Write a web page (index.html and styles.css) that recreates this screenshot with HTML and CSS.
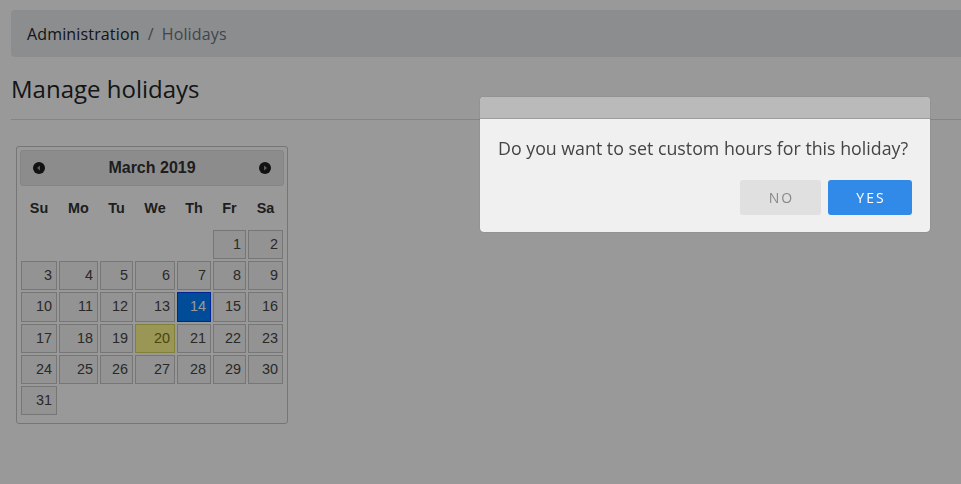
FILE: index.html
```html
<!DOCTYPE html>
<html>
<head>
<meta charset="utf-8">
<link rel="stylesheet" href="styles.css">
</head>
<body>
<div class="page">
  <nav class="breadcrumb">
    <span class="crumb">Administration</span>
    <span class="sep">/</span>
    <span class="crumb current">Holidays</span>
  </nav>
  <h1 class="title">Manage holidays</h1>
  <hr class="rule">
  <div class="datepicker">
    <div class="dp-header">
      <span class="dp-nav">
        <svg width="12" height="12" viewBox="0 0 12 12"><circle cx="6" cy="6" r="6" fill="#1e1e1e"/><path d="M4 6 L7 3.6 L7 8.4 Z" fill="#9a9a9a"/></svg>
      </span>
      <span class="dp-title">March 2019</span>
      <span class="dp-nav">
        <svg width="12" height="12" viewBox="0 0 12 12"><circle cx="6" cy="6" r="6" fill="#1e1e1e"/><path d="M8 6 L5 3.6 L5 8.4 Z" fill="#9a9a9a"/></svg>
      </span>
    </div>
    <table class="dp-table">
      <colgroup>
        <col class="c1"><col class="c2"><col class="c3"><col class="c4"><col class="c5"><col class="c6"><col class="c7">
      </colgroup>
      <thead>
        <tr><th>Su</th><th>Mo</th><th>Tu</th><th>We</th><th>Th</th><th>Fr</th><th>Sa</th></tr>
      </thead>
      <tbody>
        <tr><td></td><td></td><td></td><td></td><td></td><td><a class="day">1</a></td><td><a class="day">2</a></td></tr>
        <tr><td><a class="day">3</a></td><td><a class="day">4</a></td><td><a class="day">5</a></td><td><a class="day">6</a></td><td><a class="day">7</a></td><td><a class="day">8</a></td><td><a class="day">9</a></td></tr>
        <tr><td><a class="day">10</a></td><td><a class="day">11</a></td><td><a class="day">12</a></td><td><a class="day">13</a></td><td><a class="day active">14</a></td><td><a class="day">15</a></td><td><a class="day">16</a></td></tr>
        <tr><td><a class="day">17</a></td><td><a class="day">18</a></td><td><a class="day">19</a></td><td><a class="day today">20</a></td><td><a class="day">21</a></td><td><a class="day">22</a></td><td><a class="day">23</a></td></tr>
        <tr><td><a class="day">24</a></td><td><a class="day">25</a></td><td><a class="day">26</a></td><td><a class="day">27</a></td><td><a class="day">28</a></td><td><a class="day">29</a></td><td><a class="day">30</a></td></tr>
        <tr><td><a class="day">31</a></td><td></td><td></td><td></td><td></td><td></td><td></td></tr>
      </tbody>
    </table>
  </div>
</div>
<div class="overlay"></div>
<div class="dialog">
  <div class="dialog-titlebar"></div>
  <div class="dialog-body">
    <p class="dialog-text">Do you want to set custom hours for this holiday?</p>
    <div class="dialog-buttons">
      <button class="btn btn-no">NO</button>
      <button class="btn btn-yes">YES</button>
    </div>
  </div>
</div>
</body>
</html>
```
FILE: styles.css
```css
html, body {
  margin: 0;
  padding: 0;
  background: #ffffff;
  overflow: hidden;
}
.page {
  padding: 10px 0 0 11px;
  height: 474px;
  font-family: "Open Sans", sans-serif;
}
.breadcrumb {
  display: flex;
  align-items: center;
  height: 47px;
  margin-right: -10px;
  padding: 1px 16px 0 16px;
  box-sizing: border-box;
  background: #e9ecef;
  border-radius: 4px;
  font-size: 16px;
  letter-spacing: 0.15px;
  color: #212529;
}
.sep {
  color: #6c757d;
  padding: 0 8px 0 8px;
}
.current {
  color: #6c757d;
}
.title {
  margin: 17px 0 0 0;
  font-size: 24px;
  line-height: 29px;
  font-weight: 400;
  color: #212529;
}
.rule {
  margin: 16px 0 0 0;
  border: 0;
  border-top: 1px solid #dedede;
  height: 0;
}
.datepicker {
  margin: 26px 0 0 5px;
  width: 264px;
  padding: 3px;
  border: 1px solid #c5c5c5;
  border-radius: 3px;
  background: #ffffff;
  font-family: "Liberation Sans", Arial, sans-serif;
}
.dp-header {
  display: flex;
  align-items: center;
  justify-content: space-between;
  height: 34px;
  padding: 0 12px 0 12px;
  border: 1px solid #dddddd;
  border-radius: 3px;
  background: #e9e9e9;
}
.dp-nav {
  display: flex;
  width: 12px;
  height: 12px;
  margin-top: -1px;
}
.dp-title {
  font-weight: 700;
  font-size: 16px;
  color: #333333;
}
.dp-table {
  table-layout: fixed;
  width: 264px;
  border-collapse: separate;
  border-spacing: 0;
  margin: 0 0 4px 0;
  font-size: 14.4px;
}
.c1 { width: 38px; }
.c2 { width: 41px; }
.c3 { width: 35px; }
.c4 { width: 42px; }
.c5 { width: 36px; }
.c6 { width: 35px; }
.c7 { width: 37px; }
.dp-table th {
  height: 43px;
  padding: 0;
  font-weight: 700;
  text-align: center;
  color: #333333;
}
.dp-table td {
  padding: 1px;
}
.day {
  display: block;
  height: 27.2px;
  line-height: 27.2px;
  padding-right: 4px;
  text-align: right;
  border: 1px solid #c5c5c5;
  background: #f6f6f6;
  color: #454545;
}
.day.active {
  background: #007fff;
  border-color: #003eff;
  color: #ffffff;
}
.day.today {
  background: #fffa90;
  border-color: #dad55e;
  color: #777620;
}
.overlay {
  position: fixed;
  inset: 0;
  background: rgba(0, 0, 0, 0.4);
}
.dialog {
  position: absolute;
  left: 480px;
  top: 97px;
  width: 450px;
  height: 135px;
  background: #f0f0f0;
  border-radius: 4px;
  overflow: hidden;
  box-shadow: 0 0 1px rgba(0, 0, 0, 0.4);
  font-family: "Open Sans", sans-serif;
}
.dialog-titlebar {
  height: 21px;
  background: #bababa;
  border-bottom: 1px solid #9d9d9d;
}
.dialog-body {
  padding: 17px 18px 0 18px;
}
.dialog-text {
  margin: 0;
  font-size: 17.8px;
  line-height: 24px;
  white-space: nowrap;
  color: #444444;
}
.dialog-buttons {
  display: flex;
  justify-content: flex-end;
  gap: 7px;
  margin-top: 20px;
}
.btn {
  height: 35px;
  border: 0;
  border-radius: 3px;
  font-family: "Open Sans", sans-serif;
  font-size: 14px;
  letter-spacing: 2px;
  padding: 0 0 0 2px;
  cursor: pointer;
}
.btn-no {
  width: 81px;
  background: #e0e0e0;
  color: #888888;
}
.btn-yes {
  width: 84px;
  background: #318ae8;
  color: #ffffff;
}
```
